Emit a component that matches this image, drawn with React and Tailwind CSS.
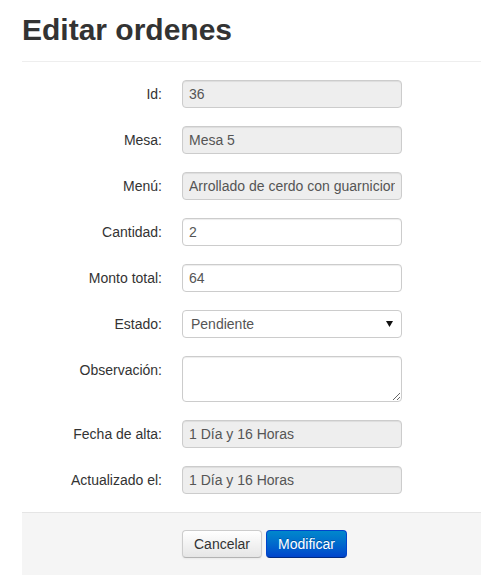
import { useState } from "react";

const inputBase =
  "w-[220px] h-[28px] px-[6px] border border-[#ccc] rounded-[4px] text-[14px] text-[#555] shadow-[inset_0_1px_1px_rgba(0,0,0,0.075)] outline-none";

function Row({ label, children }) {
  return (
    <div className="flex items-start mb-[18px]">
      <label className="w-[140px] mr-[20px] text-right leading-[28px]">{label}</label>
      {children}
    </div>
  );
}

export default function App() {
  const [form, setForm] = useState({ cantidad: "2", monto: "64", estado: "Pendiente", observacion: "" });

  const handleChange = (e) => {
    setForm({ ...form, [e.target.name]: e.target.value });
  };

  return (
    <div className="min-h-screen bg-white pl-[22px] font-['Liberation_Sans',Arial,sans-serif] text-[14px] text-[#333]">
      <h2 className="mt-[10px] pb-[11px] text-[30px] font-bold leading-[40px] text-[#333] border-b border-[#eee]">
        Editar ordenes
      </h2>

      <form className="pt-[18px]" onSubmit={(e) => e.preventDefault()}>
        <Row label="Id:">
          <input readOnly value="36" className={`${inputBase} bg-[#eee]`} />
        </Row>
        <Row label="Mesa:">
          <input readOnly value="Mesa 5" className={`${inputBase} bg-[#eee]`} />
        </Row>
        <Row label="Menú:">
          <input readOnly value="Arrollado de cerdo con guarnicion" className={`${inputBase} bg-[#eee]`} />
        </Row>
        <Row label="Cantidad:">
          <input name="cantidad" value={form.cantidad} onChange={handleChange} className={`${inputBase} bg-white`} />
        </Row>
        <Row label="Monto total:">
          <input name="monto" value={form.monto} onChange={handleChange} className={`${inputBase} bg-white`} />
        </Row>
        <Row label="Estado:">
          <div className="relative">
            <select
              name="estado"
              value={form.estado}
              onChange={handleChange}
              className="appearance-none w-[220px] h-[28px] pl-[8px] pr-[20px] border border-[#ccc] rounded-[4px] bg-white text-[14px] text-[#555] outline-none"
            >
              <option>Pendiente</option>
              <option>En preparación</option>
              <option>Entregado</option>
            </select>
            <svg className="absolute right-[9px] top-[11px] pointer-events-none" width="7" height="6" viewBox="0 0 7 6">
              <path d="M0 0 H7 L3.5 6 Z" fill="#111" />
            </svg>
          </div>
        </Row>
        <Row label="Observación:">
          <textarea
            name="observacion"
            value={form.observacion}
            onChange={handleChange}
            className={`${inputBase} h-[46px] bg-white py-[4px] block`}
          />
        </Row>
        <Row label="Fecha de alta:">
          <input readOnly value="1 Día y 16 Horas" className={`${inputBase} bg-[#eee]`} />
        </Row>
        <Row label="Actualizado el:">
          <input readOnly value="1 Día y 16 Horas" className={`${inputBase} bg-[#eee]`} />
        </Row>

        <div className="flex gap-[4px] bg-[#f5f5f5] border-t border-[#e5e5e5] pt-[17px] pb-[17px] pl-[160px]">
          <button
            type="button"
            className="h-[28px] px-[11px] leading-[18px] text-[14px] text-[#333] rounded-[4px] border border-[#ccc] border-b-[#b3b3b3] bg-gradient-to-b from-white to-[#e6e6e6] shadow-[inset_0_1px_0_rgba(255,255,255,0.2),0_1px_2px_rgba(0,0,0,0.05)]"
          >
            Cancelar
          </button>
          <button
            type="submit"
            className="h-[28px] px-[11px] leading-[18px] text-[14px] text-white rounded-[4px] border border-[#0044cc] border-b-[#002a80] bg-gradient-to-b from-[#0088cc] to-[#0044cc] [text-shadow:0_-1px_0_rgba(0,0,0,0.25)]"
          >
            Modificar
          </button>
        </div>
      </form>
    </div>
  );
}
